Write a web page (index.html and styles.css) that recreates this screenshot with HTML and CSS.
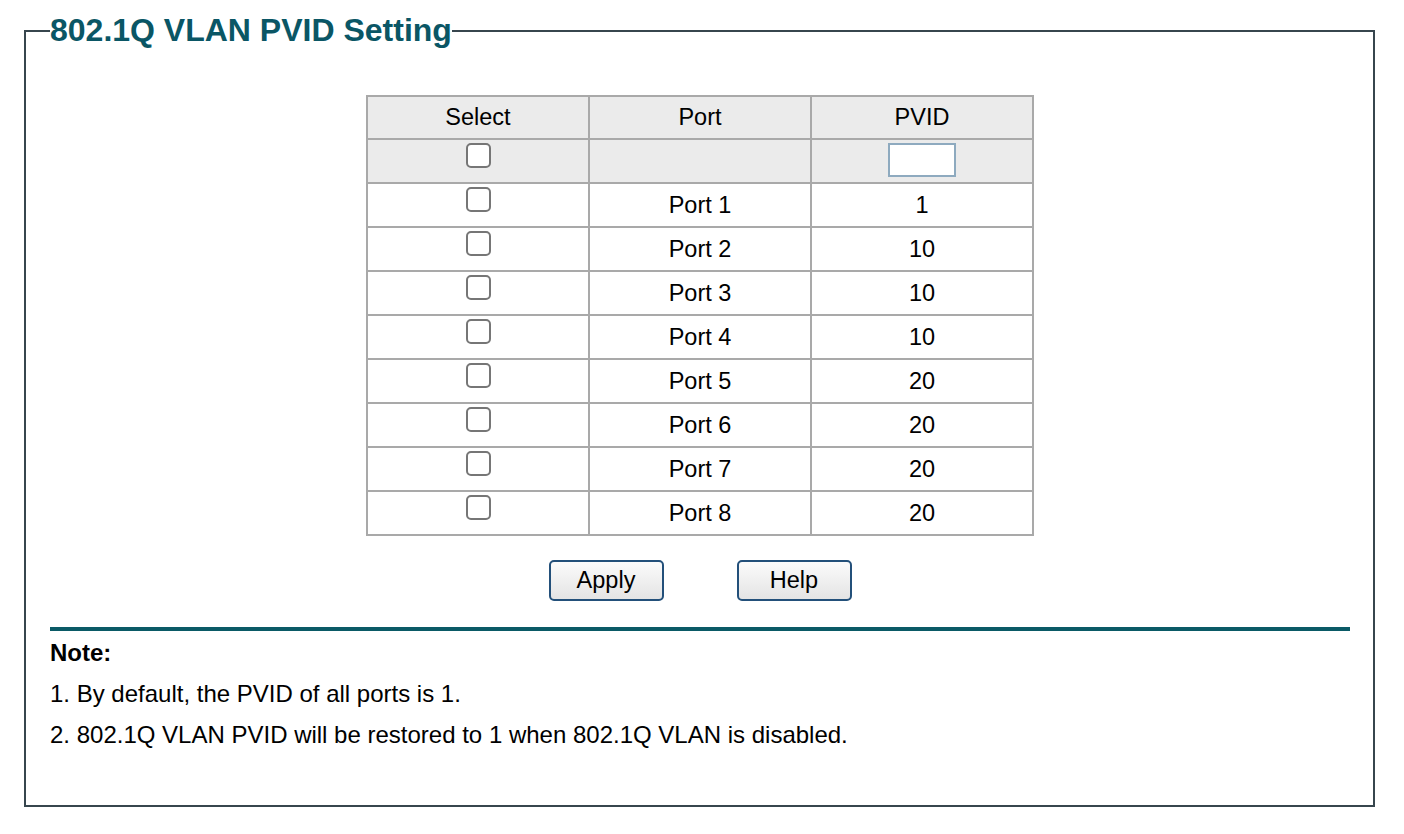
FILE: index.html
```html
<!DOCTYPE html>
<html>
<head>
<meta charset="utf-8">
<link rel="stylesheet" href="styles.css">
</head>
<body>
<fieldset class="panel">
  <legend class="panel-title">802.1Q VLAN PVID Setting</legend>
  <table class="pvid-table">
    <tr class="row-head">
      <th>Select</th><th>Port</th><th>PVID</th>
    </tr>
    <tr class="row-all">
      <td class="cell-top"><input type="checkbox" class="cb"></td>
      <td></td>
      <td class="cell-top"><input type="text" class="pvid-input"></td>
    </tr>
    <tr><td class="cell-top"><input type="checkbox" class="cb"></td><td>Port 1</td><td>1</td></tr>
    <tr><td class="cell-top"><input type="checkbox" class="cb"></td><td>Port 2</td><td>10</td></tr>
    <tr><td class="cell-top"><input type="checkbox" class="cb"></td><td>Port 3</td><td>10</td></tr>
    <tr><td class="cell-top"><input type="checkbox" class="cb"></td><td>Port 4</td><td>10</td></tr>
    <tr><td class="cell-top"><input type="checkbox" class="cb"></td><td>Port 5</td><td>20</td></tr>
    <tr><td class="cell-top"><input type="checkbox" class="cb"></td><td>Port 6</td><td>20</td></tr>
    <tr><td class="cell-top"><input type="checkbox" class="cb"></td><td>Port 7</td><td>20</td></tr>
    <tr><td class="cell-top"><input type="checkbox" class="cb"></td><td>Port 8</td><td>20</td></tr>
  </table>
  <div class="actions">
    <button class="btn" type="button">Apply</button>
    <button class="btn" type="button">Help</button>
  </div>
  <div class="rule"></div>
  <div class="note">
    <p class="note-title">Note:</p>
    <p class="note-line">1. By default, the PVID of all ports is 1.</p>
    <p class="note-line">2. 802.1Q VLAN PVID will be restored to 1 when 802.1Q VLAN is disabled.</p>
  </div>
</fieldset>
</body>
</html>
```

FILE: styles.css
```css
html, body {
  margin: 0;
  padding: 0;
  background: #ffffff;
}
body {
  font-family: "Liberation Sans", Arial, sans-serif;
  font-size: 23.5px;
  color: #000;
}
.panel {
  box-sizing: border-box;
  width: 1351px;
  height: 795px;
  margin: 12px 0 0 24px;
  padding: 0 23px 0 24px;
  border: 2px solid #37464e;
  min-width: 0;
}
.panel-title {
  padding: 0;
  margin: 0;
  font-size: 32px;
  font-weight: bold;
  color: #0a5665;
  line-height: 37px;
}
.pvid-table {
  margin: 46px auto 0;
  border-collapse: collapse;
  width: 668px;
  table-layout: fixed;
}
.pvid-table th,
.pvid-table td {
  border: 2px solid #a9a9a9;
  padding: 0;
  height: 42px;
  text-align: center;
  vertical-align: middle;
  font-weight: normal;
  font-size: 23.5px;
}
.row-head th {
  background: #ebebeb;
  height: 41px;
}
.row-all td {
  background: #ebebeb;
}
.pvid-table td.cell-top {
  vertical-align: top;
}
.cb {
  -webkit-appearance: none;
  appearance: none;
  display: block;
  box-sizing: border-box;
  width: 25px;
  height: 25px;
  margin: 3px auto 0;
  border: 2px solid #767676;
  border-radius: 5px;
  background: #fff;
}
.pvid-input {
  display: block;
  box-sizing: border-box;
  width: 68px;
  height: 34px;
  margin: 3px auto 0;
  border: 2px solid #8eaabf;
  background: #fff;
  padding: 0;
}
.actions {
  display: flex;
  justify-content: center;
  gap: 73px;
  margin-top: 24px;
}
.btn {
  box-sizing: border-box;
  width: 115px;
  height: 41px;
  border: 2px solid #23507a;
  border-radius: 5px;
  background: linear-gradient(#fbfbfb, #e4e4e4);
  font-family: "Liberation Sans", Arial, sans-serif;
  font-size: 23.5px;
  color: #000;
  padding: 0;
}
.rule {
  height: 4px;
  background: #0a5a66;
  margin-top: 26px;
}
.note {
  padding-top: 8px;
  font-size: 24px;
}
.note p {
  margin: 0;
  line-height: 27px;
}
.note-title {
  font-weight: bold;
}
.note-line {
  margin-top: 14px !important;
}
```
